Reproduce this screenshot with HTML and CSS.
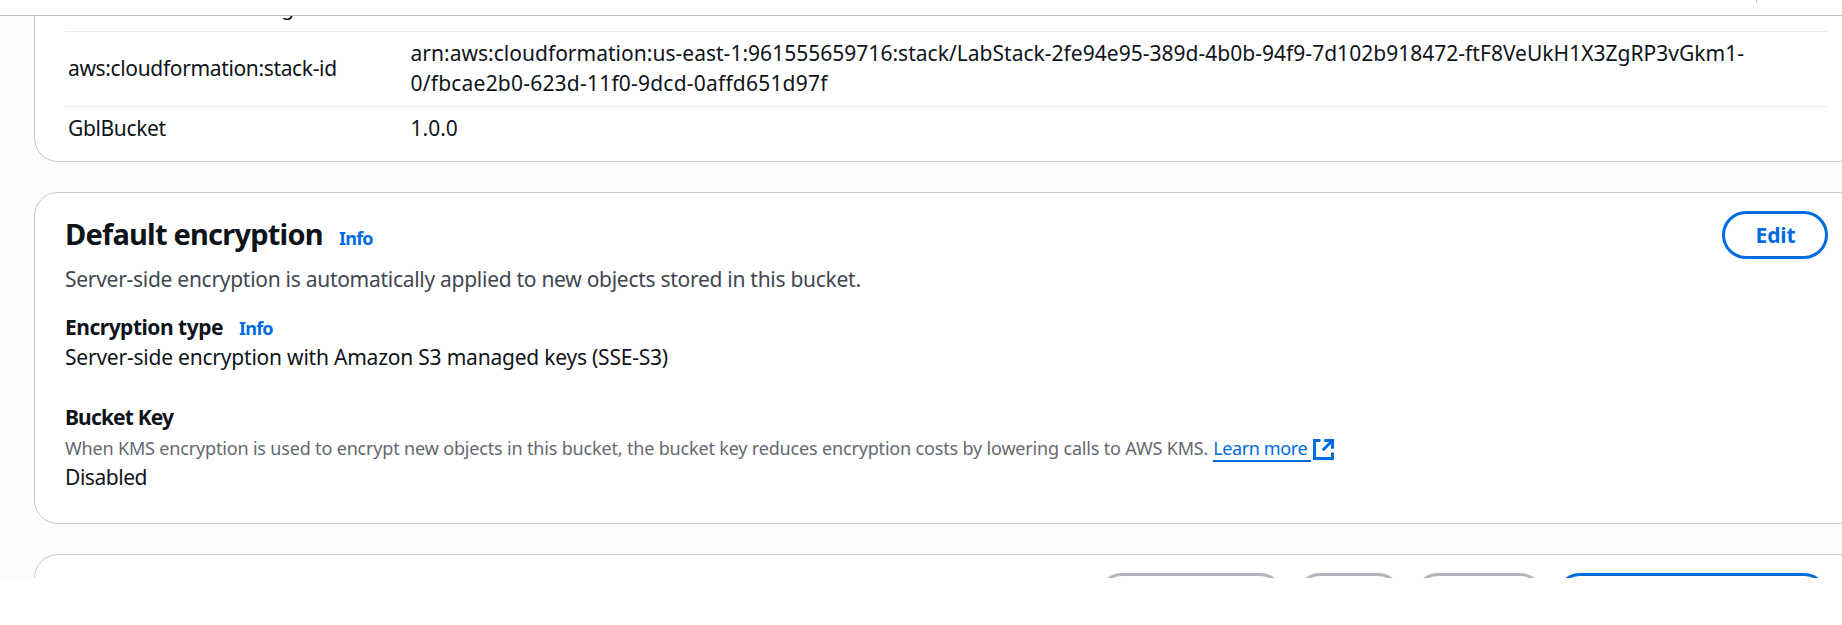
FILE: index.html
```
<!DOCTYPE html>
<html lang="en">
<head>
<meta charset="utf-8">
<title>Bucket properties</title>
<link rel="stylesheet" href="styles.css">
</head>
<body>
<div class="viewport">
  <header class="topbar"><span class="topbar-divider"></span></header>
  <main class="content">
    <section class="card tags-card">
      <div class="tag-row">
        <div class="tag-key">aws:cloudformation:logical-id</div>
        <div class="tag-value"></div>
      </div>
      <div class="tag-row">
        <div class="tag-key">aws:cloudformation:stack-id</div>
        <div class="tag-value"><span class="arn-start">arn:aws:cloudformation:us-east-1:961555659716:stack/LabStack-2fe94e95-389d-4b0b-94f9-7d102b918472-ftF8VeUkH1X3ZgRP3vGkm1-</span><br><span class="arn-end">0/fbcae2b0-623d-11f0-9dcd-0affd651d97f</span></div>
      </div>
      <div class="tag-row">
        <div class="tag-key">GblBucket</div>
        <div class="tag-value version">1.0.0</div>
      </div>
    </section>

    <section class="card encryption-card">
      <div class="card-header">
        <div class="title-row">
          <h2>Default encryption</h2>
          <a class="info">Info</a>
        </div>
        <button class="button edit">Edit</button>
      </div>
      <p class="description">Server-side encryption is automatically applied to new objects stored in this bucket.</p>
      <div class="field">
        <div class="label-row"><h3 class="type-label">Encryption type</h3><a class="info">Info</a></div>
        <div class="type-value">Server-side encryption with Amazon S3 managed keys (SSE-S3)</div>
      </div>
      <div class="field">
        <h3 class="key-label">Bucket Key</h3>
        <div class="hint">
          <span>When KMS encryption is used to encrypt new objects in this bucket, the bucket key reduces encryption costs by lowering calls to AWS KMS.</span>
          <a class="link">Learn more</a>
          <svg class="external" viewBox="0 0 14 14"><path d="M5 1H1v12h12V9M7.500 1H13v5.500M6.500 7.500L13 1"/></svg>
        </div>
        <div class="key-value">Disabled</div>
      </div>
    </section>

    <section class="card actions-card">
      <span class="button disabled wide"></span>
      <span class="button disabled small"></span>
      <span class="button disabled medium"></span>
      <span class="button primary"></span>
    </section>
  </main>
</div>
</body>
</html>
```
FILE: styles.css
```
* { box-sizing: border-box; }
body { margin: 0; background: #fff; overflow: hidden; font: 21px/30px "Noto Sans", sans-serif; color: #0f141a; }
h2, h3, p { margin: 0; }
.viewport { height: 578px; overflow: hidden; display: flex; flex-direction: column; background: #fcfcfd; }
.topbar { flex: none; height: 16px; background: #fff; border-bottom: 1px solid #c0c0c4; display: flex; justify-content: flex-end; padding-right: 85px; }
.topbar-divider { width: 1px; height: 3px; background: #c6c6cd; }
.content { flex: 1; min-height: 0; overflow: hidden; padding-left: 34px; display: flex; flex-direction: column; gap: 30px; }
.card { flex: none; width: 1828px; background: #fff; border: 1px solid #c6c6cd; border-radius: 24px; padding: 0 34px 0 30px; }

.tags-card { margin-top: -31px; height: 177px; }
.tag-row { display: grid; grid-template-columns: 342.5px 1fr; align-items: center; width: 1762px; padding: 6px 0 8px 3px; border-bottom: 1px solid #ebebf0; }
.tag-row:first-child { padding-bottom: 9px; }
.tag-row:last-child { border-bottom: 0; }
.tag-key { letter-spacing: -0.35px; }
.arn-start { letter-spacing: 0.02px; white-space: nowrap; }
.arn-end { letter-spacing: 0.21px; }
.version { letter-spacing: 0; }

.encryption-card { height: 332px; padding-top: 18px; padding-right: 33px; }
.card-header { display: flex; justify-content: space-between; align-items: flex-start; height: 53px; }
.title-row { display: flex; align-items: baseline; gap: 16px; padding-top: 5px; }
h2 { font-size: 29px; line-height: 36px; font-weight: 700; letter-spacing: -0.78px; }
h3 { font-size: 21px; line-height: 30px; font-weight: 700; }
.info { font-size: 18px; line-height: 24px; font-weight: 700; letter-spacing: -0.75px; color: #006ce0; }
.description { color: #424650; letter-spacing: -0.28px; }
.field { margin-top: 18px; }
.field + .field { margin-top: 30px; }
.label-row { display: flex; align-items: baseline; gap: 16px; height: 30px; }
.type-label { letter-spacing: -0.5px; }
.type-value { letter-spacing: -0.215px; }
.key-label { letter-spacing: -0.85px; }
.hint { display: flex; align-items: flex-start; height: 30px; padding-top: 2px; font-size: 18px; line-height: 28px; letter-spacing: -0.17px; color: #656871; white-space: nowrap; }
.link { width: 98px; height: 28px; margin-left: 5px; color: #006ce0; letter-spacing: -0.38px; border-bottom: 2px solid #006ce0; }
.external { width: 21px; height: 21px; margin: 5px 0 0 2px; fill: none; stroke: #006ce0; stroke-width: 2; }
.key-value { letter-spacing: -0.45px; }

.button { flex: none; height: 48px; border: 3px solid #006ce0; border-radius: 24px; background: #fff; color: #006ce0; font: 700 21px/30px "Noto Sans", sans-serif; }
.edit { width: 106px; padding: 6px 0 6px 1px; letter-spacing: -0.1px; }
.actions-card { display: flex; justify-content: flex-end; gap: 12px; height: 120px; padding-top: 18px; padding-right: 33px; }
.disabled { border-color: #b4b4bb; }
.wide { width: 186px; }
.small { width: 106px; }
.medium { width: 130px; }
.primary { width: 272px; }
```
